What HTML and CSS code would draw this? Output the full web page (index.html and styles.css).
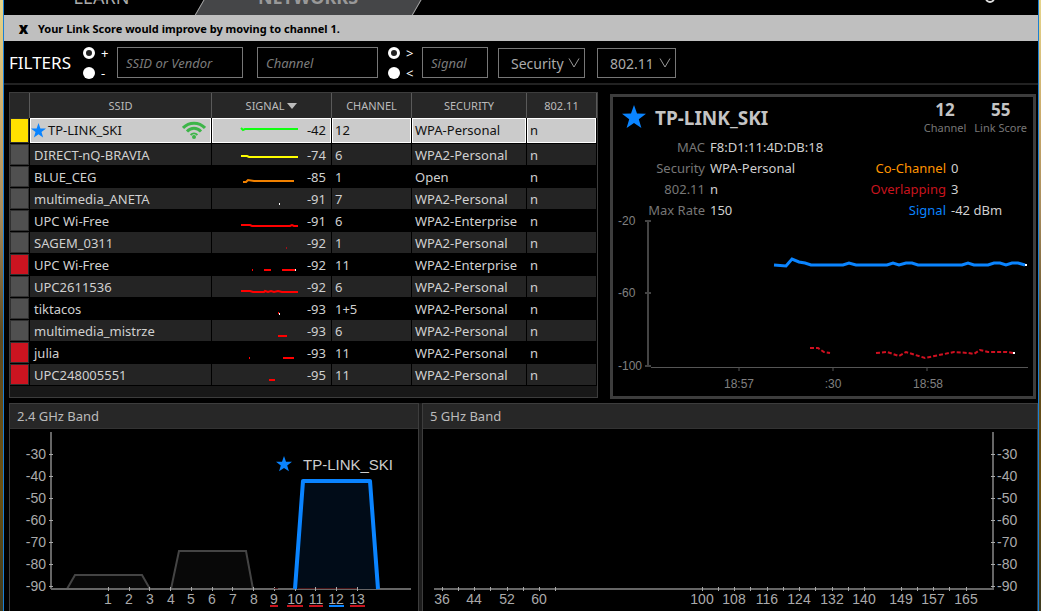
FILE: index.html
```html
<!DOCTYPE html>
<html lang="en">
<head>
  <meta charset="UTF-8">
  <meta name="viewport" content="width=device-width, initial-scale=1.0">
  <title>Networks</title>
  <link rel="stylesheet" href="styles.css">
</head>
<body>
  <!-- Shared icons -->
  <svg class="sprite" aria-hidden="true">
    <symbol id="star" viewBox="0 0 24 24">
      <path d="M12 0 L15 8.6 L24 8.8 L16.8 14.3 L19.4 23 L12 17.9 L4.6 23 L7.2 14.3 L0 8.8 L9 8.6 Z" fill="#0a84ff"/>
    </symbol>
    <symbol id="chevron" viewBox="0 0 12 10">
      <path d="M1 0.5 L6 9 L11 0.5" fill="none" stroke="#999" stroke-width="1"/>
    </symbol>
  </svg>

  <div class="window">
    <nav class="tabs">
      <a href="#" class="tab tab-learn">LEARN</a>
      <a href="#" class="tab tab-active"><span>NETWORKS</span></a>
      <span class="tab-icon"></span>
    </nav>

    <div class="notice">
      <button class="notice-close">x</button>
      <span>Your Link Score would improve by moving to channel 1.</span>
    </div>

    <form class="filters">
      <h1>FILTERS</h1>
      <div class="filter-group">
        <div class="radios">
          <label><input type="radio" name="vendor-mode" checked><span>+</span></label>
          <label><input type="radio" name="vendor-mode"><span>-</span></label>
        </div>
        <input type="text" class="field field-ssid" placeholder="SSID or Vendor" aria-label="SSID or Vendor">
      </div>
      <input type="text" class="field field-channel" placeholder="Channel" aria-label="Channel">
      <div class="filter-group">
        <div class="radios">
          <label><input type="radio" name="signal-mode" checked><span>&gt;</span></label>
          <label><input type="radio" name="signal-mode"><span>&lt;</span></label>
        </div>
        <input type="text" class="field field-signal" placeholder="Signal" aria-label="Signal">
      </div>
      <div class="dropdown dropdown-security">
        <select aria-label="Security"><option>Security</option></select>
        <svg><use href="#chevron"/></svg>
      </div>
      <div class="dropdown dropdown-mode">
        <select aria-label="802.11"><option>802.11</option></select>
        <svg><use href="#chevron"/></svg>
      </div>
    </form>

    <main class="main">
      <section class="networks">
        <table>
          <thead>
            <tr>
              <th class="col-mark"></th>
              <th>SSID</th>
              <th class="col-signal">SIGNAL <span class="sort"></span></th>
              <th class="col-channel">CHANNEL</th>
              <th class="col-security">SECURITY</th>
              <th class="col-mode">802.11</th>
            </tr>
          </thead>
          <tbody>
            <tr class="selected">
              <td class="mark"><i class="yellow"></i></td>
              <td>
                <div class="ssid">
                  <svg class="ssid-star"><use href="#star"/></svg>TP-LINK_SKI
                  <svg class="wifi" viewBox="0 0 24 18" fill="none" stroke="#3db549" stroke-width="3">
                    <path d="M1 7 C7 0.5 17 0.5 23 7"/>
                    <path d="M5 10.5 C9 6.3 15 6.3 19 10.5"/>
                    <path d="M8.6 14 C10.6 12 13.4 12 15.4 14" stroke-width="2"/>
                    <circle cx="12" cy="16" r="2" fill="#3db549" stroke="none"/>
                  </svg>
                </div>
              </td>
              <td><div class="signal"><svg><path d="M1 9 L3 11 L5 10 H58" stroke="#1f1"/></svg><span>-42</span></div></td>
              <td>12</td><td>WPA-Personal</td><td>n</td>
            </tr>
            <tr>
              <td class="mark"><i></i></td><td>DIRECT-nQ-BRAVIA</td>
              <td><div class="signal"><svg><path d="M1 12 H7 L9 13 H58" stroke="#ff0"/></svg><span>-74</span></div></td>
              <td>6</td><td>WPA2-Personal</td><td>n</td>
            </tr>
            <tr>
              <td class="mark"><i></i></td><td>BLUE_CEG</td>
              <td><div class="signal"><svg><path d="M3 16 H6 L8 14 L14 15 H54" stroke="#f08000"/></svg><span>-85</span></div></td>
              <td>1</td><td>Open</td><td>n</td>
            </tr>
            <tr>
              <td class="mark"><i></i></td><td>multimedia_ANETA</td>
              <td><div class="signal"><svg><path d="M39 16 H40" stroke="#fff"/></svg><span>-91</span></div></td>
              <td>7</td><td>WPA2-Personal</td><td>n</td>
            </tr>
            <tr>
              <td class="mark"><i></i></td><td>UPC Wi-Free</td>
              <td><div class="signal"><svg><path d="M1 15 H10 L12 16 H50 L52 15 L54 16 H58"/></svg><span>-91</span></div></td>
              <td>6</td><td>WPA2-Enterprise</td><td>n</td>
            </tr>
            <tr>
              <td class="mark"><i></i></td><td>SAGEM_0311</td>
              <td><div class="signal"><svg><path d="M46 16 H47" stroke="#a01018"/></svg><span>-92</span></div></td>
              <td>1</td><td>WPA2-Personal</td><td>n</td>
            </tr>
            <tr>
              <td class="mark"><i class="red"></i></td><td>UPC Wi-Free</td>
              <td><div class="signal"><svg><path d="M12 16 H13 M24 16 H31 M42 16 H55"/><path d="M55 16 H56" stroke="#fff"/></svg><span>-92</span></div></td>
              <td>11</td><td>WPA2-Enterprise</td><td>n</td>
            </tr>
            <tr>
              <td class="mark"><i></i></td><td>UPC2611536</td>
              <td><div class="signal"><svg><path d="M1 15 H10 L13 16 H24 L25 15 L28 16 L31 15 L34 16 L38 15 L42 16 H58"/></svg><span>-92</span></div></td>
              <td>6</td><td>WPA2-Personal</td><td>n</td>
            </tr>
            <tr>
              <td class="mark"><i></i></td><td>tiktacos</td>
              <td><div class="signal"><svg><path d="M38 15 H39"/><path d="M39 16 H40" stroke="#fff"/></svg><span>-93</span></div></td>
              <td>1+5</td><td>WPA2-Personal</td><td>n</td>
            </tr>
            <tr>
              <td class="mark"><i></i></td><td>multimedia_mistrze</td>
              <td><div class="signal"><svg><path d="M38 16 H47"/></svg><span>-93</span></div></td>
              <td>6</td><td>WPA2-Personal</td><td>n</td>
            </tr>
            <tr>
              <td class="mark"><i class="red"></i></td><td>julia</td>
              <td><div class="signal"><svg><path d="M9 16 H10 M43 16 H54"/></svg><span>-93</span></div></td>
              <td>11</td><td>WPA2-Personal</td><td>n</td>
            </tr>
            <tr>
              <td class="mark"><i class="red"></i></td><td>UPC248005551</td>
              <td><div class="signal"><svg><path d="M29 16 H35"/></svg><span>-95</span></div></td>
              <td>11</td><td>WPA2-Personal</td><td>n</td>
            </tr>
          </tbody>
        </table>
      </section>

      <section class="details">
        <header class="details-head">
          <svg class="details-star"><use href="#star"/></svg>
          <h2>TP-LINK_SKI</h2>
          <div class="stat"><b>12</b><span>Channel</span></div>
          <div class="stat"><b>55</b><span>Link Score</span></div>
        </header>
        <div class="facts">
          <dl>
            <dt>MAC</dt><dd>F8:D1:11:4D:DB:18</dd>
            <dt>Security</dt><dd>WPA-Personal</dd>
            <dt>802.11</dt><dd>n</dd>
            <dt>Max Rate</dt><dd>150</dd>
          </dl>
          <dl>
            <dt class="orange">Co-Channel</dt><dd>0</dd>
            <dt class="crimson">Overlapping</dt><dd>3</dd>
            <dt class="blue">Signal</dt><dd>-42 dBm</dd>
          </dl>
        </div>
        <!-- Signal history -->
        <svg class="chart history" viewBox="0 0 420 178">
          <path d="M35 4 V149 M32 4 H38 M32 76 H38 M32 149 H38" stroke="#444" stroke-width="2"/>
          <path d="M38 150.500 H415 M126 150 V154 M220 150 V154 M314 150 V154" stroke="#555"/>
          <g>
            <text x="5" y="8">-20</text>
            <text x="5" y="80">-60</text>
            <text x="5" y="153">-100</text>
          </g>
          <g text-anchor="middle">
            <text x="126" y="171">18:57</text>
            <text x="220" y="171">:30</text>
            <text x="315" y="171">18:58</text>
          </g>
          <polyline points="161,48 173,49 179,42 186,45 192,46 198,48 230,48 236,46 243,48 274,48 280,46 286,48 293,46 299,46 305,48 349,48 355,46 361,48 375,48 381,46 387,46 393,48 399,46 405,46 412,48" stroke="#0a84ff" stroke-width="3"/>
          <path d="M197 131 H205 L211 135 L217 136 M263 136 L274 135 L286 139 L293 135 L312 141 L341 135 L355 136 L361 137 L367 133 L375 135 H394 L400 136" stroke="#cf1020" stroke-width="2" stroke-dasharray="4 2"/>
          <path d="M412 48 H414 M400 136 H402" stroke="#fff" stroke-width="2"/>
        </svg>
      </section>
    </main>

    <div class="bands">
      <section class="band">
        <h3>2.4 GHz Band</h3>
        <svg class="chart spectrum" viewBox="0 0 408 182">
          <path d="M57 160 L65 146 H132 L140 160 Z" fill="#080808"/>
          <path d="M161 160 L169 122 H236 L243 160 Z" fill="#080808"/>
          <path d="M57 160 L65 146 H132 L140 160 M161 160 L169 122 H236 L243 160" stroke="#444" stroke-width="2"/>
          <path d="M41 3 V160 M41 160 H401" stroke="#666" stroke-width="2"/>
          <path d="M39 25.500 H43 M39 47.500 H43 M39 69.500 H43 M39 91.500 H43 M39 113.500 H43 M39 135.500 H43 M39 157.500 H43" stroke="#aaa"/>
          <path d="M98.500 158 V162 M119.500 158 V162 M139.500 158 V162 M160.500 158 V162 M181.500 158 V162 M202.500 158 V162 M222.500 158 V162 M243.500 158 V162 M264.500 158 V162 M285.500 158 V162" stroke="#aaa"/>
          <path d="M285 160 L293 52 H360 L368 160" fill="#010c18" stroke="#0a84ff" stroke-width="4" stroke-linejoin="round"/>
          <path d="M264 159.500 H268 M288 159.500 H347" stroke="#4a1518"/>
          <path d="M288 160.500 H365" stroke="#666"/>
          <path d="M305.500 158 V162 M326.500 158 V162 M347.500 158 V162" stroke="#aaa"/>
          <use href="#star" x="266" y="27" width="16" height="16"/>
          <text class="peak" x="293" y="41">TP-LINK_SKI</text>
          <g text-anchor="end">
            <text x="36" y="30">-30</text>
            <text x="36" y="52">-40</text>
            <text x="36" y="74">-50</text>
            <text x="36" y="96">-60</text>
            <text x="36" y="118">-70</text>
            <text x="36" y="140">-80</text>
            <text x="36" y="162">-90</text>
          </g>
          <g text-anchor="middle">
            <text x="98" y="175">1</text>
            <text x="119" y="175">2</text>
            <text x="140" y="175">3</text>
            <text x="161" y="175">4</text>
            <text x="181" y="175">5</text>
            <text x="202" y="175">6</text>
            <text x="223" y="175">7</text>
            <text x="244" y="175">8</text>
            <text x="264" y="175">9</text>
            <text x="285" y="175">10</text>
            <text x="306" y="175">11</text>
            <text x="326" y="175">12</text>
            <text x="347" y="175">13</text>
          </g>
          <path d="M260 177 H268 M277 177 H293 M299 177 H313 M340 177 H355" stroke="#c8141e" stroke-width="2"/>
          <path d="M319 177 H334" stroke="#0a84ff" stroke-width="2"/>
        </svg>
      </section>
      <section class="band">
        <h3>5 GHz Band</h3>
        <svg class="chart spectrum" viewBox="0 0 614 182">
          <path d="M570 3 V160 M11 160 H571" stroke="#666" stroke-width="2"/>
          <path d="M568 25.500 H572 M568 47.500 H572 M568 69.500 H572 M568 91.500 H572 M568 113.500 H572 M568 135.500 H572 M568 157.500 H572" stroke="#aaa"/>
          <path d="M19.500 158 V162 M35.500 158 V162 M51.500 158 V162 M67.500 158 V162 M84.500 158 V162 M100.500 158 V162 M116.500 158 V162 M132.500 158 V162 M279.500 158 V162 M295.500 158 V162 M311.500 158 V162 M327.500 158 V162 M344.500 158 V162 M360.500 158 V162 M376.500 158 V162 M392.500 158 V162 M409.500 158 V162 M425.500 158 V162 M441.500 158 V162 M478.500 158 V162 M494.500 158 V162 M510.500 158 V162 M526.500 158 V162 M543.500 158 V162" stroke="#aaa"/>
          <g>
            <text x="574" y="30">-30</text>
            <text x="574" y="52">-40</text>
            <text x="574" y="74">-50</text>
            <text x="574" y="96">-60</text>
            <text x="574" y="118">-70</text>
            <text x="574" y="140">-80</text>
            <text x="574" y="162">-90</text>
          </g>
          <g text-anchor="middle">
            <text x="19" y="175">36</text>
            <text x="51" y="175">44</text>
            <text x="84" y="175">52</text>
            <text x="116" y="175">60</text>
            <text x="279" y="175">100</text>
            <text x="311" y="175">108</text>
            <text x="344" y="175">116</text>
            <text x="376" y="175">124</text>
            <text x="409" y="175">132</text>
            <text x="441" y="175">140</text>
            <text x="478" y="175">149</text>
            <text x="510" y="175">157</text>
            <text x="543" y="175">165</text>
          </g>
        </svg>
      </section>
    </div>
  </div>
</body>
</html>
```

FILE: styles.css
```css
* {
  box-sizing: border-box;
}

body {
  margin: 0;
  padding: 0 2px 0 3px;
  background: linear-gradient(#e6d58c 0%, #c9a96a 20%, #a58a5c 35%, #5d4a20 55%, #6b5010 80%, #3d3a20 100%);
  font-family: "Noto Sans", "Open Sans", sans-serif;
  font-size: 13px;
  color: #d0d0d0;
  overflow: hidden;
}

h1, h2, h3, dl, dd {
  margin: 0;
  font-weight: normal;
}

.sprite {
  position: absolute;
  width: 0;
  height: 0;
}

.window {
  min-height: 100vh;
  background: #000;
  border-left: 1px solid #1a7fd4;
  border-right: 1px solid #1a7fd4;
}

/* Tabs */
.tabs {
  display: flex;
  align-items: flex-end;
  height: 15px;
  overflow: hidden;
}

.tab {
  height: 29px;
  line-height: 23px;
  font-size: 18px;
  color: #aaa;
  text-align: center;
  text-decoration: none;
}

.tab-learn {
  width: 195px;
}

.tab-active {
  width: 218px;
  font-weight: bold;
  color: #999;
  position: relative;
}

.tab-active::before {
  content: "";
  position: absolute;
  inset: 0;
  background: #454648;
  border-left: 1px solid #aaa;
  border-right: 1px solid #aaa;
  transform: skewX(-30deg);
  transform-origin: 50% 75%;
}

.tab-active span {
  position: relative;
}

.tab-icon {
  width: 10px;
  height: 10px;
  margin: 0 43px 12px auto;
  border: 2px solid #ddd;
  border-radius: 50%;
}

/* Notice bar */
.notice {
  display: flex;
  align-items: center;
  gap: 9px;
  height: 26px;
  padding-left: 14px;
  background: #bfbfbf;
  color: #000;
  font-size: 11px;
  font-weight: bold;
}

.notice-close {
  width: 11px;
  padding: 0;
  border: none;
  background: none;
  color: #000;
  font: 900 15px/20px "Noto Sans", sans-serif;
  cursor: pointer;
}

/* Filters */
.filters {
  display: flex;
  align-items: flex-end;
  gap: 10px;
  height: 44px;
  padding: 0 5px 5px;
  border-bottom: 2px solid #222;
}

.filters h1 {
  width: 64px;
  line-height: 30px;
  font-size: 17px;
  color: #fff;
}

.filter-group {
  display: flex;
  gap: 5px;
}

.radios {
  width: 29px;
  height: 31px;
}

.radios label {
  display: flex;
  align-items: center;
  gap: 6px;
  height: 20px;
  margin-top: -4px;
  color: #fff;
}

.radios label + label {
  margin-top: 0;
}

.radios input {
  appearance: none;
  width: 12px;
  height: 12px;
  margin: 0;
  border-radius: 50%;
  background: #fff;
}

.radios input:checked {
  background: #222;
  border: 3px solid #fff;
}

.field {
  height: 31px;
  padding: 0 8px;
  background: #000;
  border: 1px solid #777;
  color: #ccc;
  font: italic 13px "Noto Sans", "Open Sans", sans-serif;
}

.field::placeholder {
  color: #7c7c7c;
  opacity: 1;
}

.field-ssid {
  width: 126px;
}

.field-channel {
  width: 121px;
  margin-left: 4px;
}

.field-signal {
  width: 66px;
}

.dropdown {
  position: relative;
  height: 30px;
}

.dropdown-security {
  width: 87px;
}

.dropdown-mode {
  width: 79px;
  margin-left: 2px;
}

.dropdown select {
  appearance: none;
  width: 100%;
  height: 100%;
  padding: 0 12px;
  background: #000;
  border: 1px solid #777;
  border-radius: 0;
  color: #aaa;
  font: 14px "Noto Sans", "Open Sans", sans-serif;
}

.dropdown svg {
  position: absolute;
  right: 5px;
  top: 10px;
  width: 12px;
  height: 10px;
  pointer-events: none;
}

/* Main area */
.main {
  display: grid;
  grid-template-columns: 589fr 426fr;
  gap: 12px;
  padding: 7px 2px 4px 5px;
}

.networks {
  margin-bottom: 1px;
  padding-bottom: 11px;
  background: #181818;
  border: 1px solid #3d3d3d;
}

.networks table {
  width: 100%;
  border-collapse: separate;
  border-spacing: 0;
}

.networks th {
  height: 25px;
  padding: 0;
  background: #272727;
  border-right: 1px solid #5a5a5a;
  color: #bbb;
  font-size: 11px;
  font-weight: normal;
  line-height: 24px;
}

.col-mark { width: 20px; }
.col-signal { width: 120px; }
.col-channel { width: 80px; }
.col-security { width: 115px; }
.col-mode { width: 70px; }

.sort {
  display: inline-block;
  border: 5px solid transparent;
  border-top: 6px solid #bbb;
  border-bottom: none;
  vertical-align: 1px;
}

.networks td {
  height: 22px;
  padding: 2px 5px 0 3px;
  background: #000;
  border-right: 1px solid #000;
  border-bottom: 1px solid #000;
  line-height: 19px;
  white-space: nowrap;
}

.networks td:nth-child(2) {
  padding-left: 4px;
}

.networks tr:nth-child(even) td {
  background: #242424;
}

.networks tr.selected td {
  height: 26px;
  padding-bottom: 3px;
  background: #cbcbcb;
  box-shadow: inset 0 0 0 1px #fff;
  color: #111;
}

.networks tr td.mark,
.networks tr.selected td.mark {
  padding: 1px;
  background: #303030;
  box-shadow: none;
}

.mark i {
  display: block;
  height: 19px;
  background: #505050;
}

.mark .yellow {
  height: 23px;
  background: #ffe000;
}

.mark .red {
  background: #cc1420;
}

.ssid {
  display: flex;
  align-items: center;
  gap: 2px;
  margin-left: -3px;
}

.ssid-star {
  width: 15px;
  height: 15px;
}

.wifi {
  width: 24px;
  height: 18px;
  margin-left: auto;
}

.signal {
  display: flex;
  justify-content: flex-end;
  height: 19px;
}

.signal svg {
  width: 60px;
  height: 21px;
  margin-top: -2px;
  fill: none;
  stroke: #f00;
  stroke-width: 2;
}

.signal span {
  width: 26px;
  text-align: right;
}

/* Details panel */
.details {
  margin-top: 2px;
  border: 3px solid #3d3d3d;
}

.details-head {
  display: flex;
  gap: 8px;
  height: 44px;
  padding: 2px 6px 0 9px;
}

.details-star {
  width: 24px;
  height: 24px;
  margin-top: 6px;
}

.details-head h2 {
  flex: 1;
  line-height: 38px;
  margin-left: 1px;
  font-size: 19px;
  font-weight: bold;
  color: #c4c4c4;
}

.stat {
  display: flex;
  flex-direction: column;
  align-items: center;
}

.stat b {
  font-size: 17px;
  line-height: 22px;
  color: #c4c4c4;
}

.stat span {
  font-size: 11px;
  line-height: 14px;
  color: #777;
}

.facts {
  display: flex;
  align-items: flex-end;
  justify-content: space-between;
  padding-right: 8px;
}

.facts dl {
  display: grid;
  grid-template-columns: 92px auto;
  gap: 8px 5px;
  line-height: 13px;
}

.facts dl + dl {
  grid-template-columns: 92px 74px;
}

.facts dt {
  color: #777;
  text-align: right;
}

.facts dd {
  white-space: nowrap;
}

.facts .orange { color: #ff9500; }
.facts .crimson { color: #c8141e; }
.facts .blue { color: #0a84ff; }

/* Charts */
.chart {
  display: block;
  width: 100%;
  overflow: visible;
  fill: none;
  font-family: "Liberation Sans", Arial, sans-serif;
}

.history text {
  fill: #808080;
  font-size: 12px;
}

.spectrum text {
  fill: #aaa;
  font-size: 14px;
}

.spectrum .peak {
  fill: #ccc;
  font-size: 15px;
}

/* Bands */
.bands {
  display: grid;
  grid-template-columns: 410fr 616fr;
  gap: 3px;
  margin-left: 5px;
  background: #1c1c1c;
}

.band {
  background: #000;
  border: 1px solid #3d3d3d;
  border-bottom: none;
}

.band h3 {
  height: 25px;
  padding-left: 7px;
  background: #272727;
  border-bottom: 1px solid #333;
  font-size: 13px;
  line-height: 24px;
  color: #bbb;
}
```
